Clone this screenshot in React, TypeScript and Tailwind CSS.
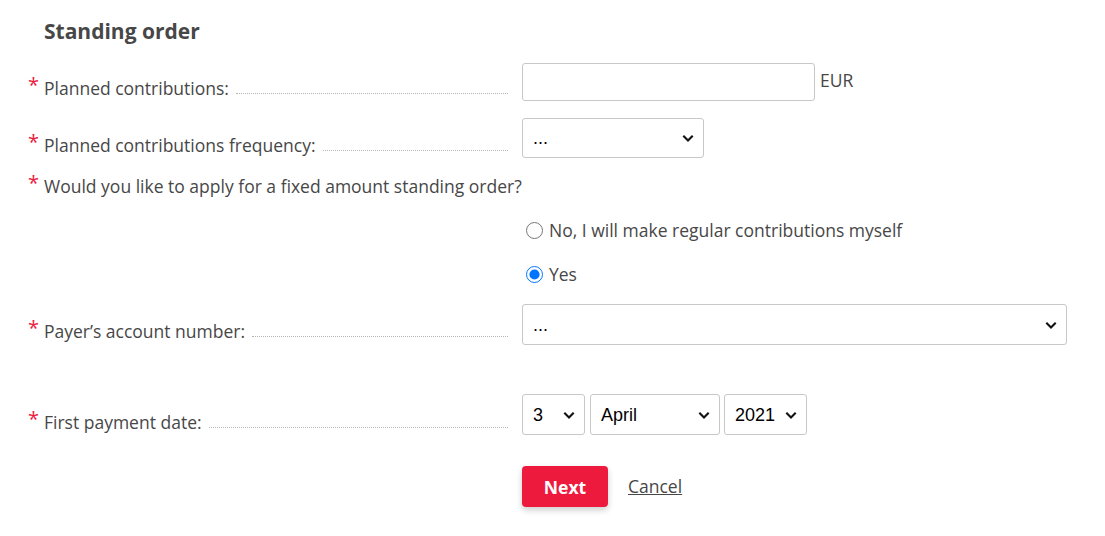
const Chevron = () => (
  <svg width="14" height="14" viewBox="0 0 14 14" className="shrink-0">
    <path d="M2.3 4.8 L7 9.5 L11.7 4.8" fill="none" stroke="#111" strokeWidth="2.1" />
  </svg>
);

const FakeSelect = ({ value, className }: { value: string; className: string }) => (
  <div
    className={`flex items-center justify-between border border-[#c8c8c8] rounded-[3px] bg-white pl-[10px] pr-[8px] text-[18px] text-black font-['Liberation_Sans',Arial,sans-serif] ${className}`}
  >
    <span>{value}</span>
    <Chevron />
  </div>
);

const Label = ({ text, top }: { text: string; top: string }) => (
  <div className={`flex w-[480px] shrink-0 items-end ${top}`}>
    <span className="w-4 text-[#ee1a3e] text-[20px] leading-[20px] self-start -mt-[1px]">*</span>
    <span className="whitespace-nowrap">{text}</span>
    <span className="flex-1 ml-[7px] mb-[6px] border-b border-dotted border-[#b5b5b5]"></span>
  </div>
);

export default function App() {
  return (
    <div className="min-h-screen bg-white text-[#474747] text-[17.5px] leading-[24px] font-['Open_Sans',sans-serif] pl-[28px] pt-[17px]">
      <h2 className="pl-4 text-[21px] font-bold text-[#474747] leading-[28px]">Standing order</h2>

      <div className="flex items-start gap-[14px] mt-[18px]">
        <Label text="Planned contributions:" top="pt-[13px]" />
        <div className="flex items-start">
          <div className="w-[293px] h-[38px] border border-[#c8c8c8] rounded-[3px]"></div>
          <span className="ml-[5px] mt-[5px]">EUR</span>
        </div>
      </div>

      <div className="flex items-start gap-[14px] mt-[17px]">
        <Label text="Planned contributions frequency:" top="pt-[15px]" />
        <FakeSelect value="..." className="w-[182px] h-[40px]" />
      </div>

      <div className="flex items-start mt-[16px]">
        <span className="w-4 text-[#ee1a3e] text-[20px] leading-[20px] -mt-[1px]">*</span>
        <span>Would you like to apply for a fixed amount standing order?</span>
      </div>

      <div className="ml-[494px] mt-[20px] flex flex-col gap-[20px]">
        <label className="flex items-center gap-[6px]">
          <input type="radio" name="so" className="w-[17px] h-[17px] m-0 ml-[4px]" />
          <span>No, I will make regular contributions myself</span>
        </label>
        <label className="flex items-center gap-[6px]">
          <input type="radio" name="so" defaultChecked className="w-[17px] h-[17px] m-0 ml-[4px]" />
          <span>Yes</span>
        </label>
      </div>

      <div className="flex items-start gap-[14px] mt-[18px]">
        <Label text="Payer’s account number:" top="pt-[15px]" />
        <FakeSelect value="..." className="w-[545px] h-[41px]" />
      </div>

      <div className="flex items-start gap-[14px] mt-[49px]">
        <Label text="First payment date:" top="pt-[16px]" />
        <div className="flex">
          <FakeSelect value="3" className="w-[63px] h-[41px]" />
          <FakeSelect value="April" className="w-[130px] h-[41px] ml-[5px]" />
          <FakeSelect value="2021" className="w-[83px] h-[41px] ml-[4px]" />
        </div>
      </div>

      <div className="flex items-center gap-[20px] ml-[494px] mt-[31px]">
        <button className="w-[86px] h-[41px] rounded-[4px] bg-[#ee1a3e] text-white font-bold shadow-[0_3px_6px_rgba(0,0,0,0.2)]">
          Next
        </button>
        <a className="underline text-[#474747] -mt-[2px]">Cancel</a>
      </div>
    </div>
  );
}
